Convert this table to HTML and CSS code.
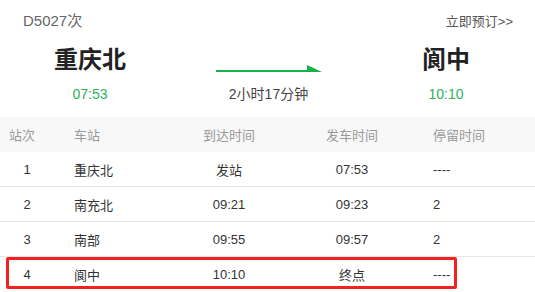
FILE: index.html
```html
<!DOCTYPE html>
<html lang="zh">
<head>
<meta charset="utf-8">
<title>D5027次</title>
<link rel="stylesheet" href="styles.css">
</head>
<body>
<div class="page">
  <div class="top">
    <span class="train">D5027次</span>
    <a class="book" href="#">立即预订&gt;&gt;</a>
  </div>
  <div class="route">
    <div class="end">
      <div class="name">重庆北</div>
      <div class="time">07:53</div>
    </div>
    <div class="mid">
      <div class="arrow"><span class="line"></span><span class="head"></span></div>
      <div class="dur">2小时17分钟</div>
    </div>
    <div class="end">
      <div class="name">阆中</div>
      <div class="time">10:10</div>
    </div>
  </div>
  <div class="table">
    <div class="row head-row">
      <div class="c1 h1">站次</div>
      <div class="c2">车站</div>
      <div class="c3">到达时间</div>
      <div class="c4">发车时间</div>
      <div class="c5">停留时间</div>
    </div>
    <div class="row">
      <div class="c1">1</div>
      <div class="c2">重庆北</div>
      <div class="c3">发站</div>
      <div class="c4">07:53</div>
      <div class="c5">----</div>
    </div>
    <div class="row">
      <div class="c1">2</div>
      <div class="c2">南充北</div>
      <div class="c3">09:21</div>
      <div class="c4">09:23</div>
      <div class="c5">2</div>
    </div>
    <div class="row">
      <div class="c1">3</div>
      <div class="c2">南部</div>
      <div class="c3">09:55</div>
      <div class="c4">09:57</div>
      <div class="c5">2</div>
    </div>
    <div class="row last">
      <div class="c1">4</div>
      <div class="c2">阆中</div>
      <div class="c3">10:10</div>
      <div class="c4">终点</div>
      <div class="c5">----</div>
      <span class="mark"></span>
    </div>
  </div>
</div>
</body>
</html>
```
FILE: styles.css
```css
* { box-sizing: border-box; }
html, body { margin: 0; padding: 0; background: #fff; }
body {
  font-family: "Liberation Sans", "Noto Sans CJK SC", sans-serif;
  color: #333;
  width: 535px;
  height: 292px;
  overflow: hidden;
}
.top {
  display: flex;
  justify-content: space-between;
  align-items: flex-end;
  padding: 11px 22px 0 23px;
  height: 30px;
}
.train { font-size: 15px; color: #666; line-height: 18px; }
.book { font-size: 13px; color: #555; text-decoration: none; line-height: 16px; margin-bottom: 0; }
.route {
  display: grid;
  grid-template-columns: 180px 1fr 178px;
  padding-top: 15px;
  height: 87px;
}
.end { text-align: center; }
.name { font-size: 24px; font-weight: bold; color: #222; line-height: 30px; }
.time { font-size: 14px; color: #2bb35b; line-height: 16px; margin-top: 11px; }
.mid { display: flex; flex-direction: column; align-items: center; padding-top: 19px; }
.arrow { display: flex; align-items: flex-end; height: 8px; width: 106px; }
.arrow .line { flex: 1; height: 2px; background: #17b24c; }
.arrow .head {
  width: 0; height: 0;
  border-left: 15px solid #17b24c;
  border-top: 7px solid transparent;
  border-bottom: 0 solid transparent;
}
.dur { font-size: 14px; color: #444; line-height: 16px; margin-top: 14px; }
.table { font-size: 13px; }
.row {
  display: grid;
  grid-template-columns: 54px 120px 110px 136px 1fr;
  align-items: center;
  height: 35px;
  border-bottom: 1px solid #e6e6e6;
  position: relative;
}
.head-row { background: #f8f8f8; color: #999; border-bottom: 0; }
.c1, .c3, .c4 { text-align: center; }
.h1 { text-align: left; padding-left: 9px; }
.c2 { padding-left: 20px; }
.c5 { padding-left: 13px; }
.last { border-bottom: 0; }
.mark {
  position: absolute;
  left: 6px;
  top: 0;
  width: 451px;
  height: 32px;
  border: 3px solid #f42121;
  border-radius: 2px;
  pointer-events: none;
}
```
